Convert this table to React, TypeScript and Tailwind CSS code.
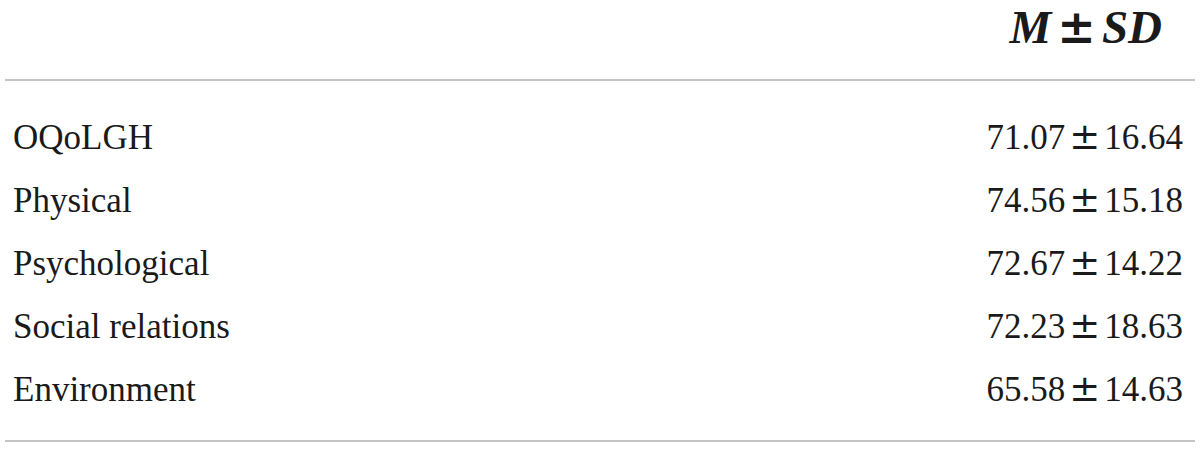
export default function App() {
  const rows = [
    ["OQoLGH", "71.07", "16.64"],
    ["Physical", "74.56", "15.18"],
    ["Psychological", "72.67", "14.22"],
    ["Social relations", "72.23", "18.63"],
    ["Environment", "65.58", "14.63"],
  ];
  const pm = { fontFamily: '"DejaVu Serif", serif' };
  return (
    <div className="w-[1200px] h-[455px] bg-white text-[#1a1a1a]" style={{ fontFamily: '"Liberation Serif", serif' }}>
      <div className="h-[79px] flex items-start justify-end pr-[38px] pt-[4px]">
        <span className="text-[47px] font-bold italic leading-none whitespace-pre">
          M<span className="not-italic font-bold text-[46px] mx-[6px] leading-[0]" style={pm}>±</span>SD
        </span>
      </div>
      <div className="mx-[5px] h-[2px] bg-[#c4c4c4]" />
      <div className="pt-[25px] pb-[19px]">
        {rows.map(([name, m, sd]) => (
          <div key={name} className="h-[63px] flex items-center justify-between pl-[13px] pr-[17px] text-[35px] leading-none">
            <span>{name}</span>
            <span className="whitespace-pre">
              {m}<span className="text-[37px] mx-[4px] leading-[0]" style={pm}>±</span>{sd}
            </span>
          </div>
        ))}
      </div>
      <div className="mx-[5px] h-[2px] bg-[#c4c4c4]" />
    </div>
  );
}
